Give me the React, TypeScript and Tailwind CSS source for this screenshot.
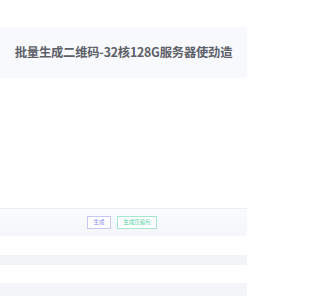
import React from 'react'

const font = { fontFamily: '"Noto Sans CJK SC", "Noto Sans", sans-serif' }

export default function App() {
  return (
    <div className="w-[247px] h-[296px] overflow-hidden bg-white" style={font}>
      <div className="h-[27px]" />
      <div className="h-[51px] bg-[#f8f9fc] flex items-center justify-center">
        <h1 className="text-[12.3px] font-bold text-[#5c6068] tracking-[-0.2px] whitespace-nowrap">
          批量生成二维码-32核128G服务器使劲造
        </h1>
      </div>
      <div className="h-[130px]" />
      <div className="h-[28px] border-t border-[#eceef2] bg-gradient-to-b from-[#fafbfe] to-[#f5f6fa] flex items-center justify-center gap-[6px] pr-[3px]">
        <button className="h-[13px] w-[24px] border border-[#c5c7f7] bg-white text-[5.5px] text-[#8d8ff2] flex items-center justify-center leading-none">
          生成
        </button>
        <button className="h-[13px] w-[40px] border border-[#a6e6cf] bg-white text-[5.5px] text-[#4fcf9f] flex items-center justify-center leading-none">
          生成压缩包
        </button>
      </div>
      <div className="h-[19px]" />
      <div className="h-[10px] bg-[#f2f3f6]" />
      <div className="h-[18px]" />
      <div className="h-[13px] bg-[#f4f5f8]" />
    </div>
  )
}
